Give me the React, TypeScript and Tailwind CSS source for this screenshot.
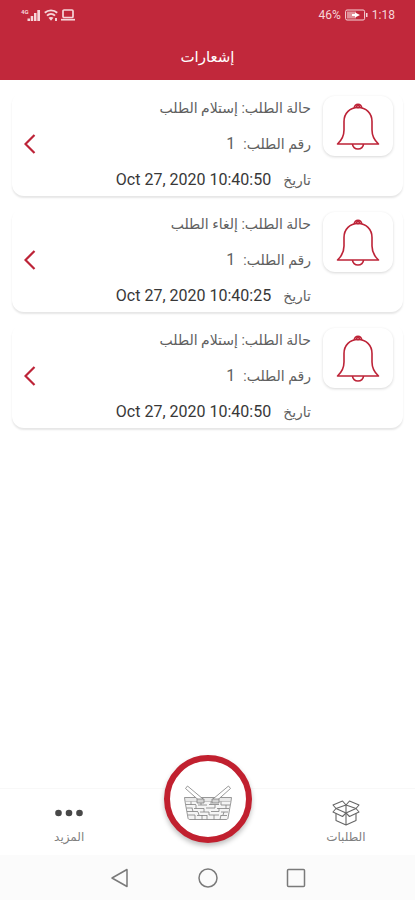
import React from 'react';

interface Notification {
  id: number;
  status: string;
  orderNumber: number;
  date: string;
}

const notifications: Notification[] = [
  { id: 1, status: 'إستلام الطلب', orderNumber: 1, date: 'Oct 27, 2020 10:40:50' },
  { id: 2, status: 'إلغاء الطلب', orderNumber: 1, date: 'Oct 27, 2020 10:40:25' },
  { id: 3, status: 'إستلام الطلب', orderNumber: 1, date: 'Oct 27, 2020 10:40:50' },
];

const BellIcon = () => (
  <svg width="44" height="48" viewBox="0 0 44 48" fill="none" stroke="#bd2337" strokeWidth="1.6" strokeLinejoin="round">
    <path d="M1.5 42c4.5-4 6.5-8 6.5-14V19.5C8 11 14 5.5 22 5.5S36 11 36 19.5V28c0 6 2 10 6.5 14z" />
    <path d="M18.3 6a3.7 3.7 0 1 1 7.4 0" />
    <circle cx="22" cy="4.5" r="1.3" />
    <path d="M16.5 42a5.5 5 0 0 0 11 0" />
  </svg>
);

const BoxIcon = () => (
  <svg width="28" height="26" viewBox="0 0 28 26" fill="none" stroke="#666" strokeWidth="1.1" strokeLinejoin="round">
    <path d="M14 5 10.5 1 1 5l3 3.5z" />
    <path d="M14 5 17.5 1 27 5l-3 3.5z" />
    <path d="M4 8.5 14 13l-3.5 3.5L1 12z" />
    <path d="M24 8.5 14 13l3.5 3.5L27 12z" />
    <path d="M4 13.5v7L14 25l10-4.5v-7M14 5v20" />
  </svg>
);

const BasketIcon = () => (
  <svg width="50" height="36" viewBox="0 0 50 36" fill="none" stroke="#808080" strokeWidth="0.8" strokeLinejoin="round">
    <path d="M1.5 12.5h47L48 16.5H2z" fill="#e8e8e8" />
    <path d="M2 16.5 5 33c0 1 1 1.500 2 1.500h36c1 0 2-.5 2-1.500l3-16.500" fill="#f5f5f5" />
    <path d="M3 19.5h10M15 20h9M26 19.5h10M38 20h9M3.5 23h6M11 23.5h10M23 23h9M34 23.5h12M4 26.5h11M17 27h9M28 26.5h8M38 27h7M5 30h7M14 30.5h10M26 30h10M38 30.5h6" />
    <path d="M8 16.5V20M13 20v3.5M18 16.5V20M21 23.5V27M28 16.5v3M32 20v3M38 16.5V20M43 20v3.5M9 23l1 3.5M15 27l1 3M26 27v3M36 23v3.5M41 27l-1 3M12 30v4.5M19 30v4.5M24 30v4.5M31 30v4.5M38 30l-1 4.5" />
    <path d="M16 15.5 2.5 3.5l2-2.5L20 14zM34 15.5 47.5 3.5l-2-2.5L30 14z" fill="#fff" />
    <path d="M14 14h7v4h-7zM29 14h7v4h-7z" fill="#d4d4d4" />
  </svg>
);

const StatusBar = () => (
  <div dir="ltr" className="flex h-[30px] items-center justify-between px-5 text-xs text-[#f6d5d9]">
    <div className="flex items-center gap-[3px]">
      <svg width="21" height="14" viewBox="0 0 21 14" fill="currentColor">
        <text x="1" y="6" fontSize="6" fontWeight="700">4G</text>
        <path d="M7.5 10.5H10V13H7.5zM10.7 8h2.5v5h-2.5zM14 5h2.5v8H14zM17.3 2H20v11h-2.7z" />
      </svg>
      <svg width="14" height="14" viewBox="0 0 14 14" fill="none" stroke="currentColor" strokeWidth="1.9">
        <path d="M.8 4.8c3.5-3.3 8.9-3.3 12.4 0M3 7.6c2.3-2.2 5.7-2.2 8 0" />
        <path d="M7 12.8 4.5 9.8c1.3-1.2 3.7-1.2 5 0z" fill="currentColor" stroke="none" />
        <path d="M12 10v3" />
      </svg>
      <svg width="14" height="12" viewBox="0 0 14 12" fill="none" stroke="currentColor" strokeWidth="1.7">
        <rect x="2" y="1" width="10" height="7.5" rx="1" />
        <path d="M0 10.7h14" />
      </svg>
    </div>
    <div className="flex items-center gap-1">
      <span>46%</span>
      <svg width="23" height="12" viewBox="0 0 23 12">
        <rect x=".6" y="1" width="19" height="10" rx="1.5" fill="none" stroke="currentColor" />
        <rect x="2" y="2.5" width="9" height="7" fill="currentColor" opacity=".6" />
        <path d="M7 5h3V3.5L15 6l-5 2.5V7H7z" fill="#fff" />
        <path d="M21 4h1.5v4H21z" fill="currentColor" />
      </svg>
      <span>1:18</span>
    </div>
  </div>
);

const NotificationCard = ({ item }: { item: Notification }) => (
  <li className="flex items-start rounded-xl bg-white py-1 ps-[10px] pe-2 shadow-[0_2px_2px_rgba(0,0,0,0.10)]">
    <div className="flex h-[60px] w-[70px] shrink-0 items-center justify-center rounded-xl bg-white shadow-[0_1px_3px_rgba(0,0,0,0.16)]">
      <BellIcon />
    </div>
    <div className="ms-3 flex flex-1 flex-col gap-3 text-sm leading-6 text-[#606060]">
      <p>حالة الطلب: {item.status}</p>
      <p className="flex gap-2">
        <span>رقم الطلب:</span>
        <span className="text-base leading-6">{item.orderNumber}</span>
      </p>
      <p className="flex gap-3">
        <span>تاريخ</span>
        <span dir="ltr" className="text-base leading-6 text-[#383838]">{item.date}</span>
      </p>
    </div>
    <button aria-label="تفاصيل" className="flex h-24 w-5 items-center justify-center">
      <svg width="12" height="20" viewBox="0 0 12 20" fill="none" stroke="#bd2337" strokeWidth="2.2">
        <path d="M10.5 1 1.5 10l9 9" />
      </svg>
    </button>
  </li>
);

export default function App() {
  return (
    <div
      dir="rtl"
      lang="ar"
      className="flex min-h-screen flex-col bg-white font-[Roboto,'DejaVu_Sans',sans-serif]"
    >
      <header className="h-20 bg-[#c1283b] text-white">
        <StatusBar />
        <h1 className="text-center text-[15px] leading-[54px]">إشعارات</h1>
      </header>

      <main className="flex-1 px-3 py-3">
        <ul className="flex flex-col gap-3">
          {notifications.map((item) => (
            <NotificationCard key={item.id} item={item} />
          ))}
        </ul>
      </main>

      <nav className="grid h-[67px] grid-cols-3 border-t border-[#f8f8f8] text-xs text-[#808080]">
        <a href="#orders" className="flex flex-col items-center pt-2">
          <span className="flex h-8 items-center">
            <BoxIcon />
          </span>
          <span className="leading-4">الطلبات</span>
        </a>
        <div className="flex justify-center">
          <button
            aria-label="السلة"
            className="-mt-[34px] flex size-[88px] shrink-0 items-center justify-center rounded-full border-[6px] border-[#c1202f] bg-white pt-2 shadow-[0_3px_5px_rgba(0,0,0,0.25)]"
          >
            <BasketIcon />
          </button>
        </div>
        <a href="#more" className="flex flex-col items-center pt-2">
          <span className="flex h-8 items-center">
            <svg width="28" height="8" viewBox="0 0 28 8" fill="#484848">
              <circle cx="3.5" cy="4" r="3.3" />
              <circle cx="14" cy="4" r="3.3" />
              <circle cx="24.5" cy="4" r="3.3" />
            </svg>
          </span>
          <span className="leading-4">المزيد</span>
        </a>
      </nav>

      {/* Android navigation buttons */}
      <div dir="ltr" className="flex h-[45px] items-center justify-center gap-17 bg-[#fbfbfb]">
        <button aria-label="Back">
          <svg width="20" height="20" viewBox="0 0 20 20" fill="none" stroke="#7a7a7a" strokeWidth="1.5" strokeLinejoin="round">
            <path d="M17 1.5v17L2 10z" />
          </svg>
        </button>
        <button aria-label="Home">
          <svg width="20" height="20" viewBox="0 0 20 20" fill="none" stroke="#7a7a7a" strokeWidth="1.5">
            <circle cx="10" cy="10" r="9" />
          </svg>
        </button>
        <button aria-label="Recent apps">
          <svg width="20" height="20" viewBox="0 0 20 20" fill="none" stroke="#7a7a7a" strokeWidth="1.5">
            <rect x="1.5" y="1.5" width="17" height="17" rx="1" />
          </svg>
        </button>
      </div>
    </div>
  );
}
